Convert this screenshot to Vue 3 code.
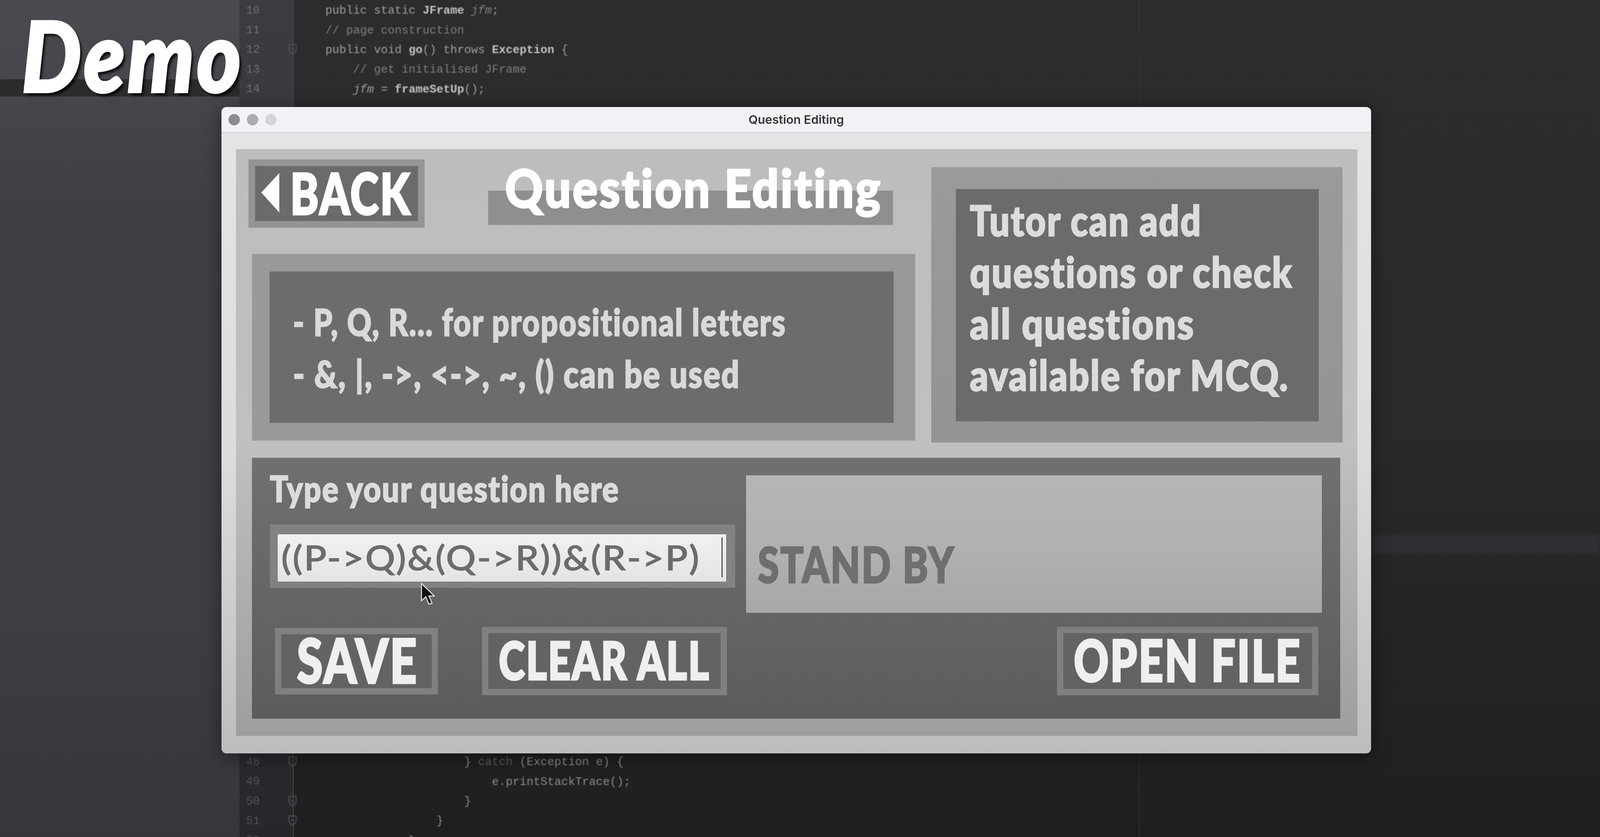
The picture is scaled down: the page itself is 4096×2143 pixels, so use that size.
<script setup>
// Scales a condensed label horizontally so it takes exactly the measured width.
const vFit = {
  mounted(el, binding) {
    const w = el.getBoundingClientRect().width
    el.style.transform = `scaleX(${binding.value / w})`
  },
}

const topRows = [
  { n: 10, parts: [['', 'public static '], ['hi', 'JFrame '], ['dim it', 'jfm'], ['', ';']] },
  { n: 11, parts: [['dim', '// page construction']] },
  { n: 12, fold: 'minus', parts: [['', 'public void '], ['hi', 'go'], ['', '() throws '], ['hi', 'Exception '], ['', '{']] },
  { n: 13, parts: [['dim', '    // get initialised JFrame']] },
  { n: 14, parts: [['', '    '], ['it', 'jfm'], ['', ' = '], ['hi', 'frameSetUp'], ['', '();']] },
]
const bottomRows = [
  { n: 48, fold: 'plain', parts: [['', '                    } '], ['dim', 'catch'], ['', ' (Exception e) {']] },
  { n: 49, parts: [['', '                        e.printStackTrace();']] },
  { n: 50, fold: 'minus', parts: [['', '                    }']] },
  { n: 51, fold: 'minus', parts: [['', '                }']] },
  { n: 52, parts: [['', '            }']] },
]
</script>

<template>
  <div class="desk">
    <aside class="side"></aside>
    <main class="editor">
      <div class="rows">
        <div v-for="r in topRows" :key="r.n" class="row">
          <span class="num">{{ r.n }}
            <svg v-if="r.fold" class="fold" viewBox="0 0 22 30"><path d="M2 3h18v16l-9 9-9-9z" /><path v-if="r.fold === 'minus'" d="M7 14h8" /></svg>
          </span>
          <code class="code"><span v-for="(p, i) in r.parts" :key="i" :class="p[0]">{{ p[1] }}</span></code>
        </div>
      </div>
      <div class="rows rows-end">
        <div v-for="r in bottomRows" :key="r.n" class="row row-low">
          <span class="num">{{ r.n }}
            <svg v-if="r.fold" class="fold" viewBox="0 0 22 30"><path d="M2 3h18v16l-9 9-9-9z" /><path v-if="r.fold === 'minus'" d="M7 14h8" /></svg>
          </span>
          <code class="code"><span v-for="(p, i) in r.parts" :key="i" :class="p[0]">{{ p[1] }}</span></code>
        </div>
      </div>
    </main>

    <div class="margin-line"></div>
    <div class="band"></div>
    <div class="demo-bar"></div>
    <div class="demo"><span class="t" v-fit="568">Demo</span></div>

    <section class="window">
      <header class="titlebar">
        <i class="dot d1"></i><i class="dot d2"></i><i class="dot d3"></i>
        <span class="wintitle"><span class="t mid" v-fit="244">Question Editing</span></span>
      </header>

      <div class="panel">
        <div class="upper">
          <div class="upper-left">
            <div class="head">
              <button class="back">
                <svg class="arrow" viewBox="0 0 46 101"><path d="M46 0v101L0 50z" /></svg>
                <span class="t" v-fit="310">BACK</span>
              </button>
              <div class="titlebox"><h1 class="heading"><span class="t" v-fit="965">Question Editing</span></h1></div>
            </div>
            <div class="note">
              <div class="note-in">
                <p><span class="t" v-fit="1263">- P, Q, R... for propositional letters</span></p>
                <p><span class="t" v-fit="1145">- &amp;, |, -&gt;, &lt;-&gt;, ~, () can be used</span></p>
              </div>
            </div>
          </div>
          <div class="tutor">
            <div class="tutor-in">
              <p><span class="t" v-fit="594">Tutor can add</span></p>
              <p><span class="t" v-fit="827">questions or check</span></p>
              <p><span class="t" v-fit="576">all questions</span></p>
              <p><span class="t" v-fit="817">available for MCQ.</span></p>
            </div>
          </div>
        </div>

        <div class="lower">
          <div class="lower-top">
            <div class="ask">
              <label class="ask-label"><span class="t" v-fit="895">Type your question here</span></label>
              <div class="field">
                <div class="field-in">
                  <span class="t" v-fit="1073">((P-&gt;Q)&amp;(Q-&gt;R))&amp;(R-&gt;P)</span>
                  <i class="caret"></i>
                </div>
                <svg class="pointer" viewBox="0 0 36 56"><path d="M2 1v44l11-10 8 19 8-3-8-18h14z" /></svg>
              </div>
            </div>
            <div class="standby"><span class="t" v-fit="505">STAND BY</span></div>
          </div>
          <div class="actions">
            <button class="btn save"><span class="t" v-fit="311">SAVE</span></button>
            <button class="btn clear"><span class="t" v-fit="541">CLEAR ALL</span></button>
            <button class="btn open"><span class="t" v-fit="583">OPEN FILE</span></button>
          </div>
        </div>
      </div>
    </section>
  </div>
</template>

<style scoped>
.desk {
  position: relative;
  display: flex;
  width: 4096px;
  height: 2143px;
  overflow: hidden;
  background: #222;
  font-family: Lato, "Liberation Sans", sans-serif;
  font-variant-ligatures: none;
}
.t {
  display: inline-block;
  white-space: nowrap;
  letter-spacing: 0.035em;
  transform-origin: left center;
}
.t.mid { transform-origin: center; letter-spacing: 0; }

/* backdrop */
.side {
  width: 613px;
  flex: none;
  background: linear-gradient(#4a4b51, #3f4045 25%, #3e3f44 70%, #36373c);
}
.editor {
  flex: 1;
  display: flex;
  flex-direction: column;
  justify-content: space-between;
  background:
    linear-gradient(to right, transparent 137px, #45464b 137px, #45464b 139px, transparent 139px),
    linear-gradient(#3b3c41, #34353a 60%, #26272b) left / 137px 100% no-repeat,
    linear-gradient(#2c2c2c, #2a2a2a 50%, #1f1f1f);
}
.rows { padding-top: 2px; filter: blur(1px); }
.rows-end { margin-bottom: -35px; }
.row { display: flex; align-items: center; height: 50.4px; }
.num {
  position: relative;
  width: 137px;
  flex: none;
  box-sizing: border-box;
  padding-left: 17px;
  font: 29px "Liberation Mono", monospace;
  color: #6e6f74;
}
.row-low .num { color: #54555a; }
.fold {
  position: absolute;
  right: -10px;
  top: 0;
  width: 22px;
  height: 30px;
  fill: none;
  stroke: #4f5055;
  stroke-width: 2.5;
}
.code {
  padding-left: 83px;
  white-space: pre;
  font: 29.6px "Liberation Mono", monospace;
  color: #a0a0a0;
}
.row-low .code { color: #8d8d8d; }
.hi { color: #c4c4c4; font-weight: 700; }
.dim { color: #808080; }
.row-low .dim { color: #5e5e5e; }
.it { font-style: italic; }
.margin-line {
  position: absolute;
  left: 2916px;
  top: 0;
  bottom: 0;
  width: 1px;
  background: #3c3c3c;
}
.band {
  position: absolute;
  left: 3512px;
  right: 0;
  top: 1369px;
  height: 49px;
  background: #2e2f33;
  filter: blur(4px);
}
.demo-bar {
  position: absolute;
  left: 0;
  top: 203px;
  width: 613px;
  height: 44px;
  background: #2b2b2b;
}
.demo {
  position: absolute;
  left: 56px;
  top: 15px;
  font-size: 248px;
  line-height: 1;
  font-weight: 900;
  font-style: italic;
  color: #fff;
  -webkit-text-stroke: 7px #fff;
  text-shadow: 8px 9px 7px rgba(0, 0, 0, 0.85);
}

/* window */
.window {
  position: absolute;
  left: 567px;
  top: 274px;
  width: 2943px;
  height: 1655px;
  border-radius: 13px;
  overflow: hidden;
  background: linear-gradient(#e5e5e5, #dcdcdc 55%, #bdbdbd);
  box-shadow: 0 10px 50px rgba(0, 0, 0, 0.45);
}
.titlebar {
  position: relative;
  display: flex;
  align-items: center;
  justify-content: flex-start;
  gap: 18px;
  height: 66px;
  box-sizing: border-box;
  padding-left: 18px;
  background: #f1f2f6;
  border-bottom: 2px solid #d0d0d0;
}
.dot { width: 29px; height: 29px; border-radius: 50%; }
.d1 { background: #8b8b8b; }
.d2 { background: #acacac; }
.d3 { background: #d5d5d5; }
.wintitle {
  position: absolute;
  left: 0;
  right: 0;
  text-align: center;
  font: 600 30px Inter, sans-serif;
  color: #343434;
}

.panel {
  box-sizing: border-box;
  width: 2871px;
  height: 1502px;
  margin: 42px 0 0 37px;
  padding: 26px 0 0 32px;
  background: linear-gradient(#bdbdbd, #c0c0c0 50%, #9e9e9e);
}
.upper { display: flex; gap: 41px; height: 725px; }
.upper-left { width: 1707px; flex: none; }
.head { display: flex; align-items: flex-start; }
.back {
  display: flex;
  align-items: center;
  gap: 28px;
  box-sizing: border-box;
  width: 451px;
  height: 175px;
  padding: 0 0 5px 16px;
  border: 17px solid #959595;
  background: #6b6b6b;
  color: #fff;
  font: 900 145px/1 Lato, sans-serif;
  -webkit-text-stroke: 5px #fff;
}
.arrow { width: 46px; height: 101px; flex: none; fill: #fff; }
.titlebox {
  position: relative;
  width: 1036px;
  height: 88px;
  margin: 80px 0 0 163px;
  background: #8f8f8f;
}
.heading {
  position: absolute;
  left: 43px;
  top: -75px;
  margin: 0;
  font-size: 134px;
  line-height: 1;
  font-weight: 900;
  color: #fff;
  -webkit-text-stroke: 4px #fff;
}
.note {
  box-sizing: border-box;
  width: 1698px;
  height: 478px;
  margin: 67px 0 0 9px;
  padding: 45px 0 0 45px;
  background: #999;
}
.note-in {
  box-sizing: border-box;
  width: 1598px;
  height: 388px;
  padding: 61px 0 0 60px;
  background: #6c6c6c;
  color: #d9d9d9;
  font-size: 96px;
  line-height: 133px;
  font-weight: 900;
  -webkit-text-stroke: 3px #d9d9d9;
}
.note-in p, .tutor-in p { margin: 0; }
.tutor {
  box-sizing: border-box;
  width: 1053px;
  height: 705px;
  margin-top: 20px;
  padding: 56px 0 0 63px;
  background: linear-gradient(#9a9a9a, #949494);
}
.tutor-in {
  box-sizing: border-box;
  width: 929px;
  height: 595px;
  padding: 13px 0 0 36px;
  background: #6b6b6b;
  color: #dcdcdc;
  font-size: 107px;
  line-height: 132px;
  font-weight: 900;
  -webkit-text-stroke: 3.5px #dcdcdc;
}

.lower {
  box-sizing: border-box;
  width: 2786px;
  height: 668px;
  margin: 39px 0 0 9px;
  padding: 45px 46px 0 46px;
  background: linear-gradient(#707070, #666 50%, #5c5c5c);
}
.lower-top { display: flex; gap: 28px; }
.ask { width: 1191px; flex: none; }
.ask-label {
  display: block;
  height: 139px;
  margin-top: -13px;
  font-size: 91px;
  line-height: 1;
  font-weight: 900;
  color: #dcdcdc;
  -webkit-text-stroke: 3px #dcdcdc;
}
.field {
  position: relative;
  box-sizing: border-box;
  height: 162px;
  padding: 25px 23px 16px 20px;
  background: #828282;
}
.field-in {
  position: relative;
  display: flex;
  align-items: center;
  box-sizing: border-box;
  height: 100%;
  padding: 0 0 4px 9px;
  background: linear-gradient(#f1f1f1, #e4e4e4);
  color: #6c6c6c;
  font-size: 87px;
  line-height: 1;
  font-weight: 500;
  -webkit-text-stroke: 1.5px #6c6c6c;
}
.caret {
  position: absolute;
  right: 9px;
  top: 8px;
  width: 3px;
  height: 102px;
  background: #555;
}
.pointer {
  position: absolute;
  left: 386px;
  top: 150px;
  width: 36px;
  height: 56px;
  fill: #111;
  stroke: #e8e8e8;
  stroke-width: 2.5;
}
.standby {
  display: flex;
  align-items: center;
  box-sizing: border-box;
  width: 1474px;
  height: 352px;
  padding: 101px 0 0 30px;
  background: linear-gradient(#b5b5b5, #b0b0b0 60%, #a7a7a7);
  color: #6f6f6f;
  font-size: 126px;
  line-height: 1;
  font-weight: 900;
  -webkit-text-stroke: 4px #6f6f6f;
}
.actions { display: flex; align-items: center; margin-top: 36px; }
.btn {
  display: flex;
  align-items: center;
  box-sizing: border-box;
  padding: 0 0 8px;
  border: 16px solid #808080;
  background: #636363;
  color: #efefef;
  font-family: Lato, sans-serif;
  font-weight: 900;
  line-height: 1;
  -webkit-text-stroke: 5px #efefef;
}
.save { width: 417px; height: 170px; margin-left: 13px; padding-left: 40px; font-size: 156px; }
.clear { width: 627px; height: 175px; margin-left: 113px; padding-left: 27px; font-size: 133px; }
.open { width: 669px; height: 175px; margin-left: auto; margin-right: 10px; padding-left: 27px; font-size: 146px; }
</style>

<style>
html, body { margin: 0; background: #222; }
</style>
